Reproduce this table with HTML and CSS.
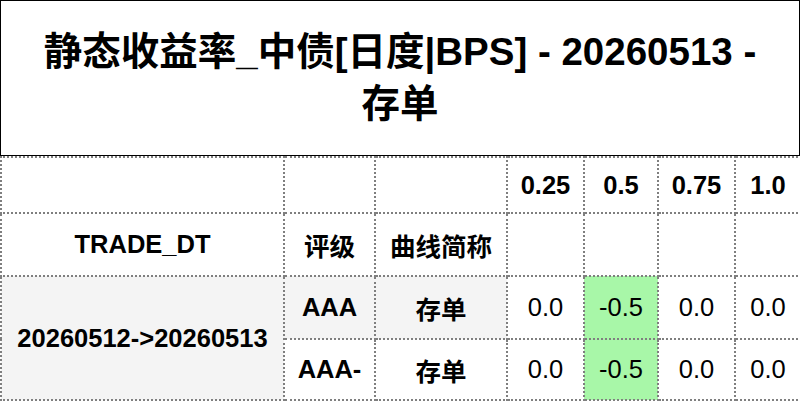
FILE: index.html
```html
<!DOCTYPE html>
<html lang="zh">
<head>
<meta charset="utf-8">
<title>静态收益率</title>
<link rel="stylesheet" href="styles.css">
</head>
<body>
<div class="report">
  <div class="title">静态收益率_中债[日度|BPS] - 20260513 -<br>存单</div>
  <table class="grid">
    <colgroup>
      <col class="c-date"><col class="c-rate"><col class="c-curve">
      <col class="c-a"><col class="c-b"><col class="c-c"><col class="c-d">
    </colgroup>
    <thead>
      <tr class="r-head1">
        <th></th><th></th><th></th>
        <th>0.25</th><th>0.5</th><th>0.75</th><th>1.0</th>
      </tr>
      <tr class="r-head2">
        <th>TRADE_DT</th><th>评级</th><th>曲线简称</th>
        <th></th><th></th><th></th><th></th>
      </tr>
    </thead>
    <tbody>
      <tr class="r-data1">
        <th class="shade" rowspan="2">20260512-&gt;20260513</th>
        <th class="shade">AAA</th>
        <th class="shade">存单</th>
        <td>0.0</td><td class="neg">-0.5</td><td>0.0</td><td>0.0</td>
      </tr>
      <tr class="r-data2">
        <th>AAA-</th>
        <th>存单</th>
        <td>0.0</td><td class="neg">-0.5</td><td>0.0</td><td>0.0</td>
      </tr>
    </tbody>
  </table>
</div>
</body>
</html>
```
FILE: styles.css
```css
html, body {
  margin: 0;
  padding: 0;
  background: #ffffff;
}

body {
  font-family: "Liberation Sans", "Noto Sans CJK SC", sans-serif;
  color: #000000;
}

.report {
  width: 800px;
}

.title {
  box-sizing: border-box;
  height: 156px;
  border: 1px solid #000000;
  display: flex;
  align-items: center;
  justify-content: center;
  text-align: center;
  font-size: 38.5px;
  font-weight: bold;
  line-height: 52px;
}

.grid {
  width: 800px;
  border-collapse: collapse;
  table-layout: fixed;
  font-size: 25.5px;
}

.c-date { width: 283px; }
.c-rate { width: 91px; }
.c-curve { width: 132px; }
.c-a { width: 77px; }
.c-b { width: 74px; }
.c-c { width: 77px; }
.c-d { width: 66px; }

.grid th,
.grid td {
  border: 2px dotted #7f7f7f;
  padding: 0;
  text-align: center;
  vertical-align: middle;
  white-space: nowrap;
}

.grid th {
  font-weight: bold;
}

.grid td {
  font-weight: normal;
}

.r-head1 { height: 56px; }
.r-head2 { height: 63px; }
.r-data1 { height: 63px; }
.r-data2 { height: 61px; }

.shade {
  background: #f4f4f4;
}

.neg {
  background: #a8f7a8;
}
```
